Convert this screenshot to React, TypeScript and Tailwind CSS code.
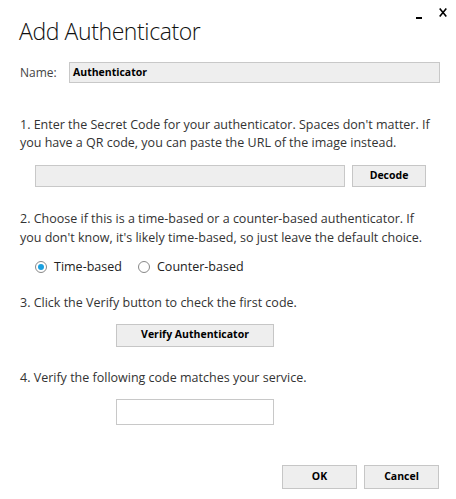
import { useState } from 'react';

const btn =
  "bg-[#eeeeee] border border-[#c6c6c6] text-[10.5px] font-bold text-black flex items-center justify-center";

export default function App() {
  const [mode, setMode] = useState<'time' | 'counter'>('time');

  return (
    <div className="relative w-[456px] h-[499px] bg-white text-[#222] font-['Open_Sans',sans-serif] overflow-hidden">
      {/* window controls */}
      <div className="absolute top-[5px] right-[9px] flex items-center gap-[17px]">
        <span className="block w-[6px] h-[2px] bg-black mt-[12px]" />
        <svg width="8" height="9" viewBox="0 0 8 9" className="block">
          <path d="M0.7 0.5 L7.3 8.5 M7.3 0.5 L0.7 8.5" stroke="#000" strokeWidth="1.6" fill="none" />
        </svg>
      </div>

      <div className="pl-[20px] pr-[16px]">
        <h1 className="pt-[15px] text-[23px] tracking-[-0.4px] font-light leading-[32px] text-[#111] -ml-[1px]">Add Authenticator</h1>

        <div className="mt-[15px] flex items-center">
          <span className="w-[49px] text-[12px] text-[#444]">Name:</span>
          <div className="w-[371px] h-[21px] bg-[#eeeeee] border border-[#c8c8c8] px-[3px] flex items-center text-[10.5px] font-bold text-black">
            Authenticator
          </div>
        </div>

        <p className="mt-[33px] text-[12.5px] leading-[18px] text-[#333] w-[415px]">
          1. Enter the Secret Code for your authenticator. Spaces don't matter. If you have a QR code, you can paste the URL of the image instead.
        </p>

        <div className="mt-[13px] pl-[15px] flex items-center gap-[7px]">
          <div className="w-[310px] h-[22px] bg-[#eeeeee] border border-[#c8c8c8]" />
          <button className={`${btn} w-[74px] h-[22px]`}>Decode</button>
        </div>

        <p className="mt-[22px] text-[12.5px] leading-[19px] text-[#333] w-[415px]">
          2. Choose if this is a time-based or a counter-based authenticator. If you don't know, it's likely time-based, so just leave the default choice.
        </p>

        <div className="mt-[11px] pl-[15px] flex items-center text-[12.5px] text-[#222]">
          <label className="flex items-center gap-[7px] w-[103px]" onClick={() => setMode('time')}>
            <span className="w-[12px] h-[12px] rounded-full border border-[#888] flex items-center justify-center">
              {mode === 'time' && <span className="w-[6px] h-[6px] rounded-full bg-[#1aa0e0]" />}
            </span>
            Time-based
          </label>
          <label className="flex items-center gap-[7px]" onClick={() => setMode('counter')}>
            <span className="w-[12px] h-[12px] rounded-full border border-[#888] flex items-center justify-center">
              {mode === 'counter' && <span className="w-[6px] h-[6px] rounded-full bg-[#1aa0e0]" />}
            </span>
            Counter-based
          </label>
        </div>

        <p className="mt-[17px] text-[12.5px] leading-[18px] text-[#333]">3. Click the Verify button to check the first code.</p>

        <div className="mt-[12px] pl-[96px]">
          <button className={`${btn} w-[158px] h-[23px]`}>Verify Authenticator</button>
        </div>

        <p className="mt-[22px] text-[12.5px] leading-[18px] text-[#333]">4. Verify the following code matches your service.</p>

        <div className="mt-[12px] pl-[96px]">
          <div className="w-[158px] h-[26px] bg-white border border-[#c8c8c8]" />
        </div>

        <div className="mt-[40px] flex justify-end gap-[7px] pr-[1px]">
          <button className={`${btn} w-[75px] h-[24px]`}>OK</button>
          <button className={`${btn} w-[75px] h-[24px]`}>Cancel</button>
        </div>
      </div>
    </div>
  );
}
